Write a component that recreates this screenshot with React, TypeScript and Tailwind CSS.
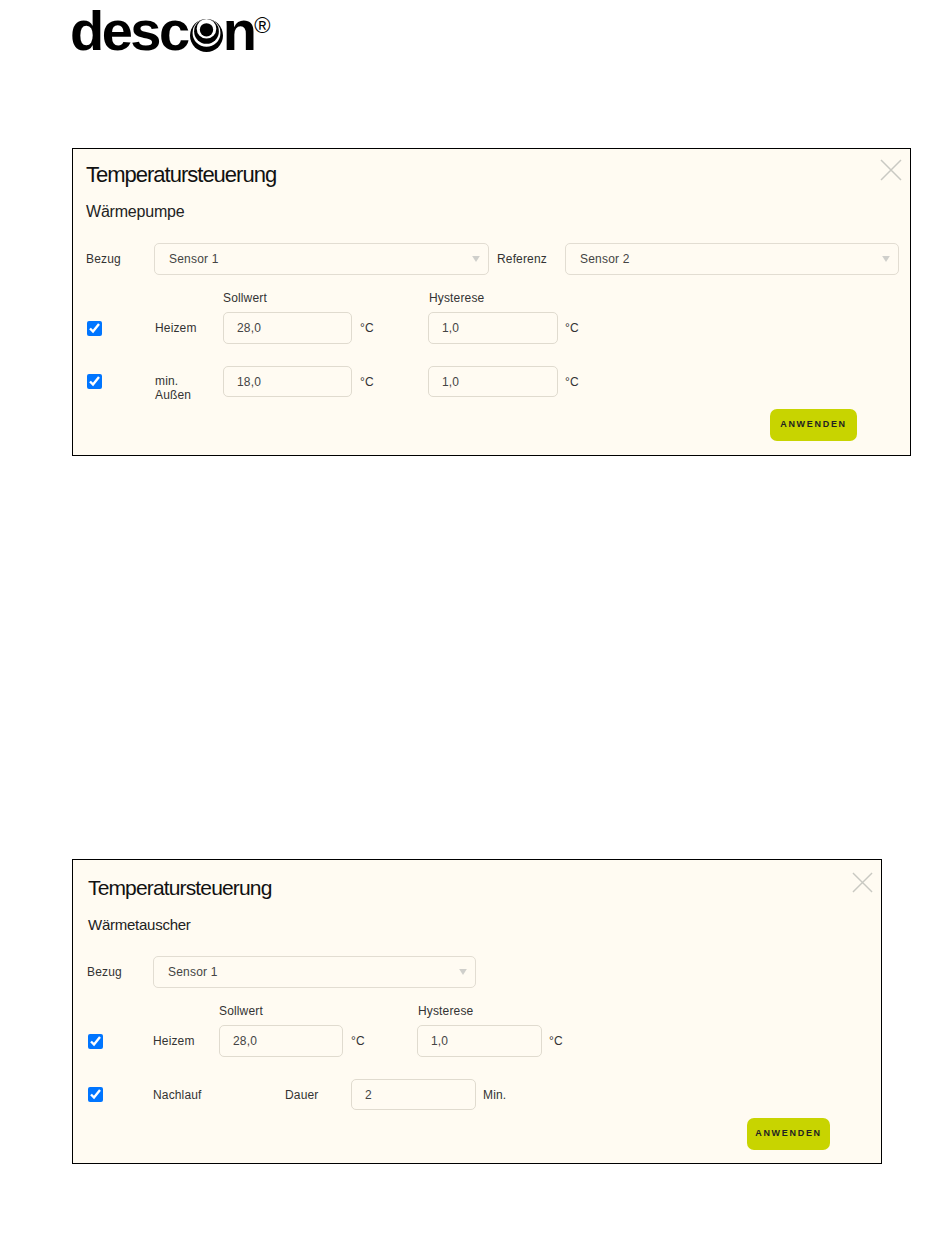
const FONT = "font-['Liberation_Sans',Arial,sans-serif] tracking-[0.15px]";

function Logo() {
  return (
    <div className="flex h-[148px] items-start pl-[70px]">
      <div className="relative flex items-end font-['Liberation_Sans',Arial,sans-serif] text-[56px] font-bold leading-[62px] tracking-[-2.5px] text-black">
        <span>desc</span>
        <svg className="mb-[10px] ml-[2px] h-[33px] w-[33px]" viewBox="0 0 32 32">
          <circle cx="16" cy="16" r="16" fill="#000" />
          <circle cx="16" cy="13.5" r="13.5" fill="#fff" />
          <circle cx="16" cy="12" r="12" fill="#000" />
          <circle cx="16" cy="9.5" r="9.5" fill="#fff" />
          <circle cx="16" cy="10.5" r="6.5" fill="#000" />
        </svg>
        <span>n</span>
        <span className="mb-[22px] text-[22px] font-normal leading-[28px] tracking-normal">®</span>
      </div>
    </div>
  );
}

function CloseIcon({ size }: { size: string }) {
  return (
    <svg className={size} viewBox="0 0 22 22" fill="none" stroke="#c9c9c2" strokeWidth="1.5">
      <path d="M1 1 L21 21 M21 1 L1 21" />
    </svg>
  );
}

function Select({ value, width }: { value: string; width: string }) {
  return (
    <div className={`flex h-[32px] items-center justify-between rounded-[5px] border border-[#e2ddd2] pl-[14px] pr-[8px] text-[12px] text-[#444] ${width}`}>
      <span className="tracking-[0.2px]">{value}</span>
      <svg className="h-[6px] w-[8px]" viewBox="0 0 9 7">
        <path d="M0 0 H9 L4.5 7 Z" fill="#cfcfcb" />
      </svg>
    </div>
  );
}

function Field({ value, width, height = "h-[32px]" }: { value: string; width: string; height?: string }) {
  return (
    <input
      readOnly
      value={value}
      className={`rounded-[5px] border border-[#e0dbcf] bg-transparent pl-[13px] text-[12px] text-[#444] outline-none ${height} ${width}`}
    />
  );
}

function Check() {
  return <input type="checkbox" checked readOnly className="m-0 h-[15px] w-[15px] accent-[#0075ff]" />;
}

function ApplyButton({ width }: { width: string }) {
  return (
    <button className={`h-[32px] rounded-[7px] bg-[#c8d400] text-center text-[9px] font-bold tracking-[1.7px] text-[#222] ${width}`}>
      ANWENDEN
    </button>
  );
}

interface HeadingProps {
  title: string;
  sub: string;
  titleClass: string;
  subClass: string;
  closeClass: string;
  closeSize: string;
}

function Heading({ title, sub, titleClass, subClass, closeClass, closeSize }: HeadingProps) {
  return (
    <>
      <div className="flex items-start justify-between">
        <h2 className={`font-normal leading-[26px] text-[#111] ${titleClass}`}>{title}</h2>
        <div className={closeClass}>
          <CloseIcon size={closeSize} />
        </div>
      </div>
      <h3 className={`mt-[14px] font-normal leading-[20px] text-[#222] ${subClass}`}>{sub}</h3>
    </>
  );
}

function HeatPumpPanel() {
  return (
    <section className="ml-[72px] w-[839px] border border-black bg-[#fffbf2] pb-[14px] pl-[13px] pr-[11px] pt-[13px]">
      <Heading
        title="Temperatursteuerung"
        sub="Wärmepumpe"
        titleClass="text-[22px] tracking-[-1px]"
        subClass="text-[16px] tracking-[-0.2px]"
        closeClass="mr-[-3px] mt-[-3px]"
        closeSize="h-[22px] w-[22px]"
      />

      <div className="mt-[21px] flex items-center text-[12px] text-[#333]">
        <span className="w-[68px]">Bezug</span>
        <Select value="Sensor 1" width="w-[335px]" />
        <span className="ml-[8px] w-[68px]">Referenz</span>
        <Select value="Sensor 2" width="w-[334px]" />
      </div>

      <div className="mt-[15px] flex h-[16px] items-center pl-[136px] text-[12px] text-[#333]">
        <span className="w-[206px] pl-[1px]">Sollwert</span>
        <span className="pl-[1px]">Hysterese</span>
      </div>

      <div className="mt-[6px] flex items-center text-[12px] text-[#333]">
        <div className="flex w-[68px] pl-[1px]">
          <Check />
        </div>
        <span className="w-[69px] pl-[1px]">Heizem</span>
        <Field value="28,0" width="w-[129px]" />
        <span className="ml-[8px] w-[68px]">°C</span>
        <Field value="1,0" width="w-[130px]" />
        <span className="ml-[7px]">°C</span>
      </div>

      <div className="mt-[22px] flex h-[31px] items-center text-[12px] text-[#333]">
        <div className="flex w-[68px] pl-[1px]">
          <Check />
        </div>
        <span className="mt-[13px] w-[69px] pl-[1px] leading-[14px]">
          min.
          <br />
          Außen
        </span>
        <Field value="18,0" width="w-[129px]" height="h-[31px]" />
        <span className="ml-[8px] w-[68px]">°C</span>
        <Field value="1,0" width="w-[130px]" height="h-[31px]" />
        <span className="ml-[7px]">°C</span>
      </div>

      <div className="mt-[12px] flex pl-[684px]">
        <ApplyButton width="w-[87px]" />
      </div>
    </section>
  );
}

function ExchangerPanel() {
  return (
    <section className="ml-[72px] mt-[403px] w-[810px] border border-black bg-[#fffbf2] pb-[13px] pl-[15px] pr-[7px] pt-[15px]">
      <Heading
        title="Temperatursteuerung"
        sub="Wärmetauscher"
        titleClass="text-[21px] tracking-[-0.85px]"
        subClass="text-[15px] tracking-[-0.25px]"
        closeClass="mr-[1px] mt-[-3px]"
        closeSize="h-[21px] w-[21px]"
      />

      <div className="mt-[21px] flex items-center text-[12px] text-[#333]">
        <span className="ml-[-1px] w-[66px]">Bezug</span>
        <Select value="Sensor 1" width="w-[323px]" />
      </div>

      <div className="mt-[15px] flex h-[16px] items-center pl-[131px] text-[12px] text-[#333]">
        <span className="w-[199px]">Sollwert</span>
        <span>Hysterese</span>
      </div>

      <div className="mt-[6px] flex items-center text-[12px] text-[#333]">
        <div className="flex w-[65px]">
          <Check />
        </div>
        <span className="w-[66px]">Heizem</span>
        <Field value="28,0" width="w-[124px]" />
        <span className="ml-[8px] w-[66px]">°C</span>
        <Field value="1,0" width="w-[125px]" />
        <span className="ml-[7px]">°C</span>
      </div>

      <div className="mt-[22px] flex h-[31px] items-center text-[12px] text-[#333]">
        <div className="flex w-[65px]">
          <Check />
        </div>
        <span className="w-[132px]">Nachlauf</span>
        <span className="w-[66px]">Dauer</span>
        <Field value="2" width="w-[125px]" height="h-[31px]" />
        <span className="ml-[7px]">Min.</span>
      </div>

      <div className="mt-[8px] flex pl-[659px]">
        <ApplyButton width="w-[83px]" />
      </div>
    </section>
  );
}

export default function App() {
  return (
    <div className={`min-h-[1260px] w-[950px] bg-white ${FONT}`}>
      <Logo />
      <HeatPumpPanel />
      <ExchangerPanel />
    </div>
  );
}
